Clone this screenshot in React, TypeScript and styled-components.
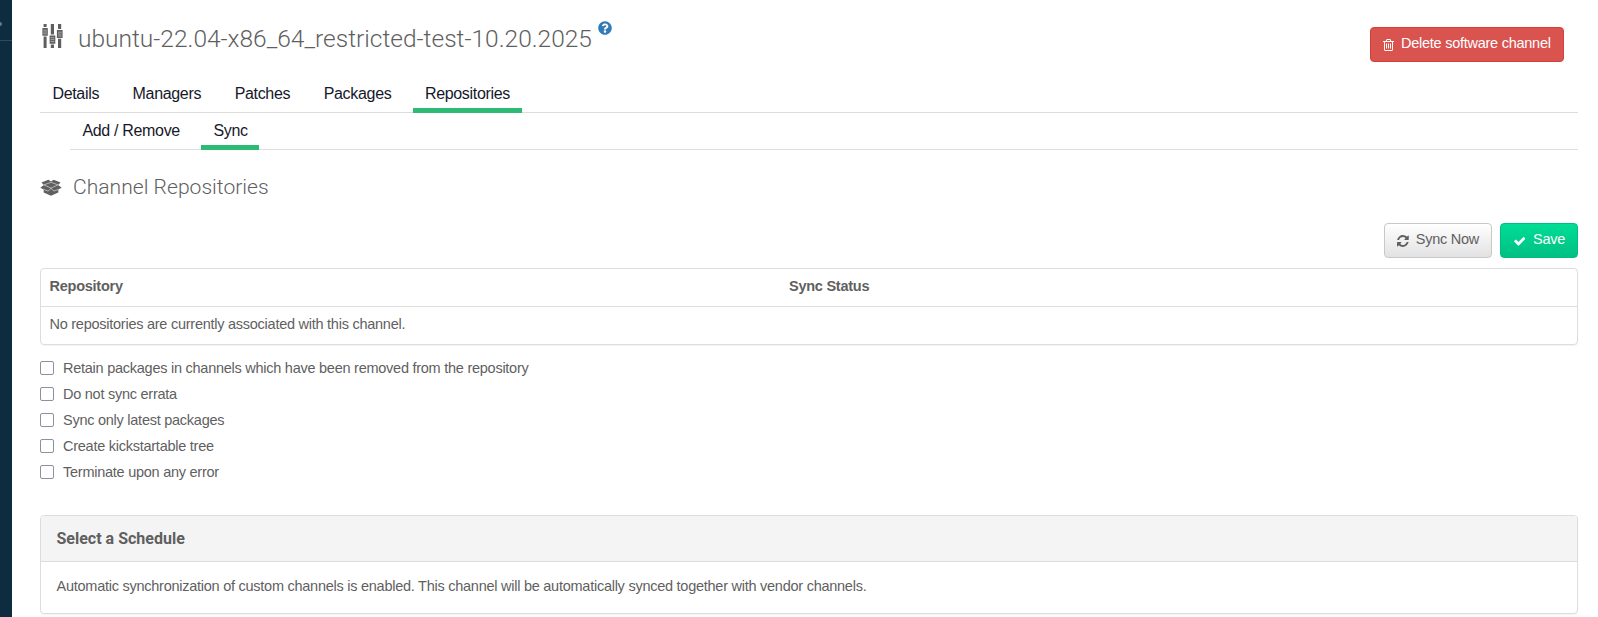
import React from "react";
import styled, { createGlobalStyle } from "styled-components";
import { FaQuestionCircle } from "react-icons/fa";

const Global = createGlobalStyle`
  * { box-sizing: border-box; }
  body {
    margin: 0;
    background: #fff;
    color: #5f5f5f;
    font: 14.5px/20px "Liberation Sans", Arial, sans-serif;
    letter-spacing: -0.255px;
  }
`;

const Page = styled.div`
  display: flex;
  height: 617px;
  overflow: hidden;
`;

const Sidebar = styled.aside`
  flex: 0 0 12px;
  background: #0d2c3f;
`;

const SidebarItem = styled.div`
  height: 41px;
  padding-top: 22px;
  border-bottom: 1px solid #31495a;
  &::before {
    content: "";
    display: block;
    width: 2px;
    height: 4px;
    border-radius: 0 2px 2px 0;
    background: #6f7a80;
  }
`;

const Content = styled.main`
  flex: 1;
  padding: 0 20px 0 28px;
`;

const Header = styled.header`
  display: flex;
  justify-content: space-between;
  align-items: flex-start;
  height: 76px;
  padding: 23px 14px 0 2px;
`;

const Title = styled.h1`
  display: flex;
  align-items: flex-start;
  margin: 0;
  font: 300 24.5px/30px Roboto, sans-serif;
  letter-spacing: 0;
  & > span { margin: 1px 6px 0 15px; }
`;

const HelpIcon = styled(FaQuestionCircle)`
  width: 14px;
  height: 14px;
  margin-top: -2px;
  color: #337ab7;
`;

const variants = {
  default: "color:#5f5f5f;border-color:#c8c8c8;background:linear-gradient(#fff,#e2e2e2);",
  success: "color:#fff;border-color:#00bd80;background:linear-gradient(#00de96,#00bf82);",
  danger: "color:#fff;border-color:#d43f3a;background:#d9534f;",
};

const Button = styled.button<{ $variant: keyof typeof variants }>`
  display: flex;
  align-items: flex-start;
  height: 35px;
  padding: 5px 12px 0;
  border: 1px solid;
  border-radius: 4px;
  font: inherit;
  letter-spacing: inherit;
  white-space: nowrap;
  ${(p) => variants[p.$variant]}
  svg { margin-top: 6px; }
`;

const DeleteButton = styled(Button)`
  width: 194px;
  margin-top: 4px;
  gap: 7px;
`;

const Tabs = styled.nav<{ $nested?: boolean }>`
  display: flex;
  gap: 9.5px;
  height: 37px;
  margin-left: ${(p) => (p.$nested ? 30 : 0)}px;
  box-shadow: inset 0 -1px #ddd;
`;

const Tab = styled.a<{ $active?: boolean }>`
  padding: 8px 11.6px 0 12.4px;
  border-bottom: 5px solid ${(p) => (p.$active ? "#2dba75" : "transparent")};
  color: #16182a;
  font-size: 16px;
  letter-spacing: -0.32px;
  white-space: nowrap;
`;

const Heading = styled.h2`
  display: flex;
  gap: 11px;
  margin: 25px 0 24px;
  font: 300 21.1px/24px Roboto, sans-serif;
  letter-spacing: 0;
  svg { margin-top: 4px; }
`;

const Toolbar = styled.div`
  display: flex;
  justify-content: flex-end;
  gap: 8px;
  margin-bottom: 10px;
`;

const SyncButton = styled(Button)`
  width: 108px;
  gap: 7px;
`;

const SaveButton = styled(Button)`
  width: 78px;
  padding-left: 13px;
  gap: 7.5px;
`;

const Card = styled.section`
  border: 1px solid #ddd;
  border-radius: 4px;
  box-shadow: 0 1px 1px rgba(0, 0, 0, 0.05);
  overflow: hidden;
`;

const TableRow = styled.div<{ $head?: boolean }>`
  display: grid;
  grid-template-columns: 739.5px 1fr;
  height: ${(p) => (p.$head ? 38 : 37)}px;
  padding: 7px 8.5px 0;
  border-bottom: ${(p) => (p.$head ? "1px solid #ddd" : "0")};
  font-weight: ${(p) => (p.$head ? 700 : 400)};
  white-space: nowrap;
`;

const Options = styled.div`
  display: flex;
  flex-direction: column;
  gap: 6px;
  margin: 13px 0 33px;
`;

const Option = styled.label`
  display: flex;
  gap: 9px;
  height: 20px;
`;

const Checkbox = styled.input.attrs({ type: "checkbox" })`
  appearance: none;
  width: 14px;
  height: 14px;
  margin: 3px 0 0;
  border: 1px solid #8f8f9d;
  border-radius: 2px;
  background: #fff;
`;

const PanelTitle = styled.h3`
  height: 46px;
  margin: 0;
  padding: 12px 15.5px 0;
  border-bottom: 1px solid #ddd;
  background: #f4f4f4;
  font: 700 16px/22px Roboto, sans-serif;
  letter-spacing: 0;
`;

const PanelBody = styled.div`
  height: 51px;
  padding: 14px 15.5px 0;
`;

const ChannelIcon = () => (
  <svg width="21" height="25" viewBox="0 0 21 25" fill="#5f5f5f">
    <path d="M1.6 1h3v3h-3zM1.6 13.4h3V25h-3zM8.8 1h3.2v10.5H8.8zM8.8 21.4h3.2V25H8.8zM16 1h3.2v5H16zM16 15.8h3.2V25H16z" />
    <path d="M.4 5h5.4v7.8H.4zM7.6 12.5h5.7v8.2H7.6zM14.9 7h5.7v8.1h-5.7z" />
    <path stroke="#b4b4b4" strokeWidth=".8" d="M1.4 7.2h3.4M1.4 9h3.4M1.4 10.8h3.4M8.6 14.7h3.7M8.6 16.6h3.7M8.6 18.5h3.7M15.9 9.2h3.7M15.9 11.1h3.7M15.9 13h3.7" />
  </svg>
);

const BoxIcon = () => (
  <svg width="22" height="17" viewBox="0 0 21 16">
    <path fill="#5f5f5f" d="M1.4 3.2 8 .5l2.500 1.800L13 .5l6.600 2.700-2.300 2.300 3.400 2.700-3.200 1.600v2.900l-7 3.200-7-3.200V9.800L.3 8.200l3.400-2.700z" />
    <path fill="none" stroke="#fff" strokeWidth=".5" d="M3.700 5.500l6.800-2.400 6.800 2.400-6.800 3zM3.500 9.800l4.200 1.600 2.800-2.600 2.800 2.600 4.200-1.600" />
  </svg>
);

const TrashIcon = () => (
  <svg width="11" height="12" viewBox="192 128 1408 1536" fill="currentColor">
    <path d="M704 736v576q0 14-9 23t-23 9h-64q-14 0-23-9t-9-23v-576q0-14 9-23t23-9h64q14 0 23 9t9 23zm256 0v576q0 14-9 23t-23 9h-64q-14 0-23-9t-9-23v-576q0-14 9-23t23-9h64q14 0 23 9t9 23zm256 0v576q0 14-9 23t-23 9h-64q-14 0-23-9t-9-23v-576q0-14 9-23t23-9h64q14 0 23 9t9 23zm128 724v-948h-896v948q0 22 7 40.5t14.5 27 10.5 8.5h832q3 0 10.5-8.5t14.5-27 7-40.5zm-672-1076h448l-48-117q-7-9-17-11h-317q-10 2-17 11zm928 32v64q0 14-9 23t-23 9h-96v948q0 83-47 143.5t-113 60.5h-832q-66 0-113-58.5t-47-141.5v-952h-96q-14 0-23-9t-9-23v-64q0-14 9-23t23-9h309l70-167q15-37 54-63t79-26h320q40 0 79 26t54 63l70 167h309q14 0 23 9t9 23z" />
  </svg>
);

const RefreshIcon = () => (
  <svg width="12" height="12" viewBox="0 128 1536 1536" fill="currentColor">
    <path d="M1511 1056q0 5-1 7-64 268-268 434.500t-478 166.500q-146 0-282.500-55t-243.500-157l-129 129q-19 19-45 19t-45-19-19-45v-448q0-26 19-45t45-19h448q26 0 45 19t19 45-19 45l-137 137q71 66 161 102t187 36q134 0 250-65t186-179q11-17 53-117 8-23 30-23h192q13 0 22.500 9.500t9.500 22.500zm25-800v448q0 26-19 45t-45 19h-448q-26 0-45-19t-19-45 19-45l138-138q-148-137-349-137-134 0-250 65t-186 179q-11 17-53 117-8 23-30 23h-199q-13 0-22.500-9.500t-9.500-22.500v-7q65-268 270-434.500t480-166.500q146 0 284 55.500t245 156.500l130-129q19-19 45-19t45 19 19 45z" />
  </svg>
);

const CheckIcon = () => (
  <svg width="13" height="13" viewBox="100 160 1592 1592" fill="currentColor">
    <path d="M1671 566q0 40-28 68l-724 724-136 136q-28 28-68 28t-68-28l-136-136-362-362q-28-28-28-68t28-68l136-136q28-28 68-28t68 28l294 295 656-657q28-28 68-28t68 28l136 136q28 28 28 68z" />
  </svg>
);

const tabs = ["Details", "Managers", "Patches", "Packages", "Repositories"];
const options = [
  "Retain packages in channels which have been removed from the repository",
  "Do not sync errata",
  "Sync only latest packages",
  "Create kickstartable tree",
  "Terminate upon any error",
];

export default function App() {
  return (
    <Page>
      <Global />
      <Sidebar>
        <SidebarItem />
      </Sidebar>
      <Content>
        <Header>
          <Title>
            <ChannelIcon />
            <span>ubuntu-22.04-x86_64_restricted-test-10.20.2025</span>
            <HelpIcon />
          </Title>
          <DeleteButton $variant="danger">
            <TrashIcon />
            <span>Delete software channel</span>
          </DeleteButton>
        </Header>
        <Tabs>
          {tabs.map((t) => (
            <Tab key={t} $active={t === "Repositories"}>{t}</Tab>
          ))}
        </Tabs>
        <Tabs $nested>
          <Tab>Add / Remove</Tab>
          <Tab $active>Sync</Tab>
        </Tabs>
        <Heading>
          <BoxIcon />
          <span>Channel Repositories</span>
        </Heading>
        <Toolbar>
          <SyncButton $variant="default">
            <RefreshIcon />
            <span>Sync Now</span>
          </SyncButton>
          <SaveButton $variant="success">
            <CheckIcon />
            <span>Save</span>
          </SaveButton>
        </Toolbar>
        <Card>
          <TableRow $head>
            <span>Repository</span>
            <span>Sync Status</span>
          </TableRow>
          <TableRow>
            <span>No repositories are currently associated with this channel.</span>
          </TableRow>
        </Card>
        <Options>
          {options.map((o) => (
            <Option key={o}>
              <Checkbox />
              <span>{o}</span>
            </Option>
          ))}
        </Options>
        <Card>
          <PanelTitle>Select a Schedule</PanelTitle>
          <PanelBody>
            Automatic synchronization of custom channels is enabled. This channel will be automatically synced together with vendor channels.
          </PanelBody>
        </Card>
      </Content>
    </Page>
  );
}
